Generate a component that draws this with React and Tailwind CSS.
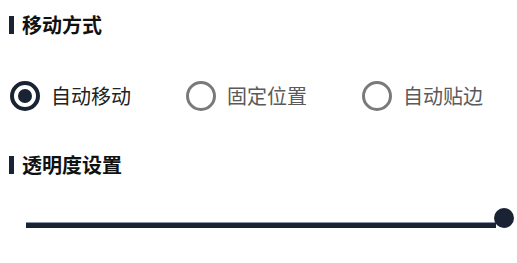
import React from "react";

const font = { fontFamily: '"Noto Sans CJK SC", "Noto Sans", sans-serif' };

function Heading({ children }) {
  return (
    <div className="flex h-[20px] items-center pl-[9px]">
      <div className="h-[18px] w-[5px] bg-[#1a2333]" />
      <span className="ml-[8px] text-[20px] font-bold leading-[20px] text-[#111111]">{children}</span>
    </div>
  );
}

function Radio({ checked, label }) {
  return (
    <div className="flex h-[30px] items-center">
      {checked ? (
        <div className="flex h-[30px] w-[30px] items-center justify-center rounded-full border-[4px] border-[#1a2333]">
          <div className="h-[14px] w-[14px] rounded-full bg-[#1a2333]" />
        </div>
      ) : (
        <div className="h-[30px] w-[30px] rounded-full border-[3px] border-[#7a7a7a]" />
      )}
      <span
        className={
          "ml-[11px] text-[20px] leading-[20px] " +
          (checked ? "text-[#222222]" : "text-[#5a5a5a]")
        }
      >
        {label}
      </span>
    </div>
  );
}

export default function App() {
  return (
    <div className="h-[263px] w-[517px] overflow-hidden bg-white pt-[15px]" style={font}>
      <Heading>移动方式</Heading>
      <div className="mt-[46px] flex gap-[55px] pl-[10px]">
        <Radio checked label="自动移动" />
        <Radio label="固定位置" />
        <Radio label="自动贴边" />
      </div>
      <div className="mt-[44px]">
        <Heading>透明度设置</Heading>
      </div>
      <div className="relative mt-[33px] h-[21px]">
        <div className="absolute left-[26px] top-[14px] h-[6px] w-[470px] border-t border-[#8a96a8] bg-[#1a2333]" />
        <div className="absolute left-[494px] top-0 h-[20px] w-[20px] rounded-full bg-[#1a2333]" />
      </div>
    </div>
  );
}
